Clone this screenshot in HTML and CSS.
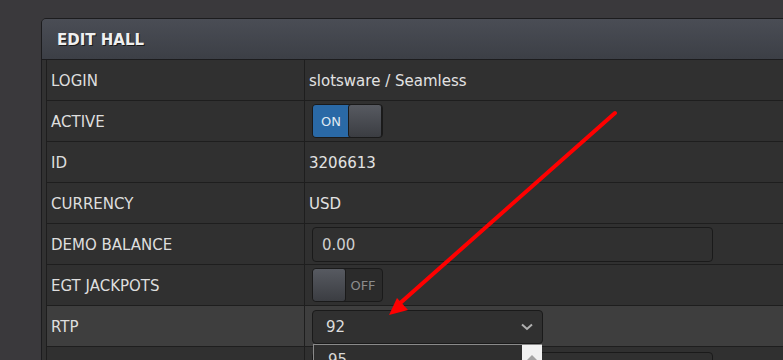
FILE: index.html
```html
<!DOCTYPE html>
<html lang="en">
<head>
  <meta charset="UTF-8">
  <title>Edit Hall</title>
  <link rel="stylesheet" href="styles.css">
</head>
<body>
  <div class="panel">
    <div class="panel-head">EDIT HALL</div>
    <div class="panel-body">
      <div class="grid">
        <div class="row">
          <div class="label">LOGIN</div>
          <div class="value">slotsware / Seamless</div>
        </div>
        <div class="row">
          <div class="label">ACTIVE</div>
          <div class="value">
            <div class="switch on">
              <span class="switch-text">ON</span>
              <span class="knob"></span>
            </div>
          </div>
        </div>
        <div class="row">
          <div class="label">ID</div>
          <div class="value">3206613</div>
        </div>
        <div class="row">
          <div class="label">CURRENCY</div>
          <div class="value">USD</div>
        </div>
        <div class="row">
          <div class="label">DEMO BALANCE</div>
          <div class="value">
            <input class="field" type="text" value="0.00">
          </div>
        </div>
        <div class="row">
          <div class="label">EGT JACKPOTS</div>
          <div class="value">
            <div class="switch off">
              <span class="knob"></span>
              <span class="switch-text">OFF</span>
            </div>
          </div>
        </div>
        <div class="row hover">
          <div class="label">RTP</div>
          <div class="value">
            <div class="select-wrap">
              <div class="select">
                <span>92</span>
                <svg class="chev" width="12" height="8" viewBox="0 0 12 8"><polyline points="1,1.5 6,6 11,1.5" fill="none" stroke="#b0b0b0" stroke-width="2"/></svg>
              </div>
              <div class="options">
                <div class="option">95</div>
                <div class="scroll"><span class="up"></span></div>
              </div>
            </div>
          </div>
        </div>
        <div class="row">
          <div class="label"></div>
          <div class="value">
            <input class="field next" type="text" value="">
          </div>
        </div>
      </div>
    </div>
  </div>

  <svg class="arrow" width="783" height="360" viewBox="0 0 783 360">
    <line x1="615" y1="113" x2="398" y2="305" stroke="#ff0000" stroke-width="4" stroke-linecap="round"/>
    <polygon points="389,315 397,298 408,310" fill="#ff0000"/>
  </svg>
</body>
</html>
```

FILE: styles.css
```css
body {
  margin: 0;
  background: #3a393c;
  font-family: "DejaVu Sans", Tahoma, sans-serif;
  font-size: 15px;
  color: #e2e2e2;
  overflow: hidden;
  height: 360px;
}

.panel {
  margin: 18px 0 0 41px;
  width: 900px;
  border: 1px solid #1c1c1e;
  border-radius: 5px 0 0 0;
  background: #303030;
}

.panel-head {
  height: 40px;
  line-height: 42px;
  padding-left: 15px;
  border-bottom: 1px solid #1c1c1e;
  border-radius: 4px 0 0 0;
  background: linear-gradient(#4a4d55, #3c3f46);
  font-weight: bold;
  color: #f0f0f0;
  text-shadow: 1px 1px 0 #1a1a1a;
}

.panel-body {
  padding-left: 4px;
  background: #313131;
}

.grid {
  border-left: 1px solid #1e1e1e;
}

.row {
  display: flex;
  height: 40px;
  border-bottom: 1px solid #1e1e1e;
  background: #303030;
}

.row.hover {
  background: #3e3e3e;
}

.label {
  width: 253px;
  padding: 2px 0 0 4px;
  border-right: 1px solid #1e1e1e;
  display: flex;
  align-items: center;
  color: #dedede;
}

.value {
  flex: 1;
  padding: 2px 0 0 4px;
  display: flex;
  align-items: center;
}

.switch {
  margin: -2px 0 0 3px;
  width: 69px;
  height: 32px;
  border: 1px solid #1a1a1a;
  border-radius: 4px;
  display: flex;
  overflow: hidden;
  background: #2b2b2b;
}

.switch-text {
  width: 36px;
  display: flex;
  align-items: center;
  justify-content: center;
  font-size: 13px;
}

.switch.on .switch-text {
  background: #2a69a6;
  color: #dfe8f2;
}

.switch.off .switch-text {
  color: #8c8c8c;
}

.knob {
  width: 32px;
  border: 1px solid #1a1a1a;
  margin: -1px;
  border-radius: 3px;
  background: linear-gradient(#575a61, #3b3d42);
}

.field {
  margin: 0 0 1px 3px;
  height: 33px;
  box-sizing: content-box;
  padding: 0 9px;
  width: 381px;
  border: 1px solid #1a1a1a;
  border-radius: 4px;
  background: #303030;
  color: #cfcfcf;
  font: 15px "DejaVu Sans", Tahoma, sans-serif;
  outline: none;
}

.field.next {
  margin-top: 4px;
}

.select-wrap {
  position: relative;
  margin: 0 0 0 3px;
}

.select {
  width: 207px;
  height: 32px;
  padding: 0 9px 0 13px;
  border: 1px solid #1a1a1a;
  border-radius: 4px;
  background: #303030;
  display: flex;
  align-items: center;
  justify-content: space-between;
  color: #dcdcdc;
}

.options {
  position: absolute;
  top: 34px;
  left: 1px;
  width: 228px;
  height: 40px;
  border-top: 1px solid #8a8a8a;
  border-left: 1px solid #8a8a8a;
  background: #2f2f2f;
  display: flex;
  z-index: 2;
}

.option {
  flex: 1;
  padding: 6px 0 0 14px;
  color: #d8d8d8;
}

.scroll {
  width: 20px;
  background: #f1f1f1;
  display: flex;
  justify-content: center;
}

.up {
  margin-top: 10px;
  width: 0;
  height: 0;
  border-left: 5px solid transparent;
  border-right: 5px solid transparent;
  border-bottom: 5px solid #a3a3a3;
}

.arrow {
  position: absolute;
  left: 0;
  top: 0;
  z-index: 5;
}
```
